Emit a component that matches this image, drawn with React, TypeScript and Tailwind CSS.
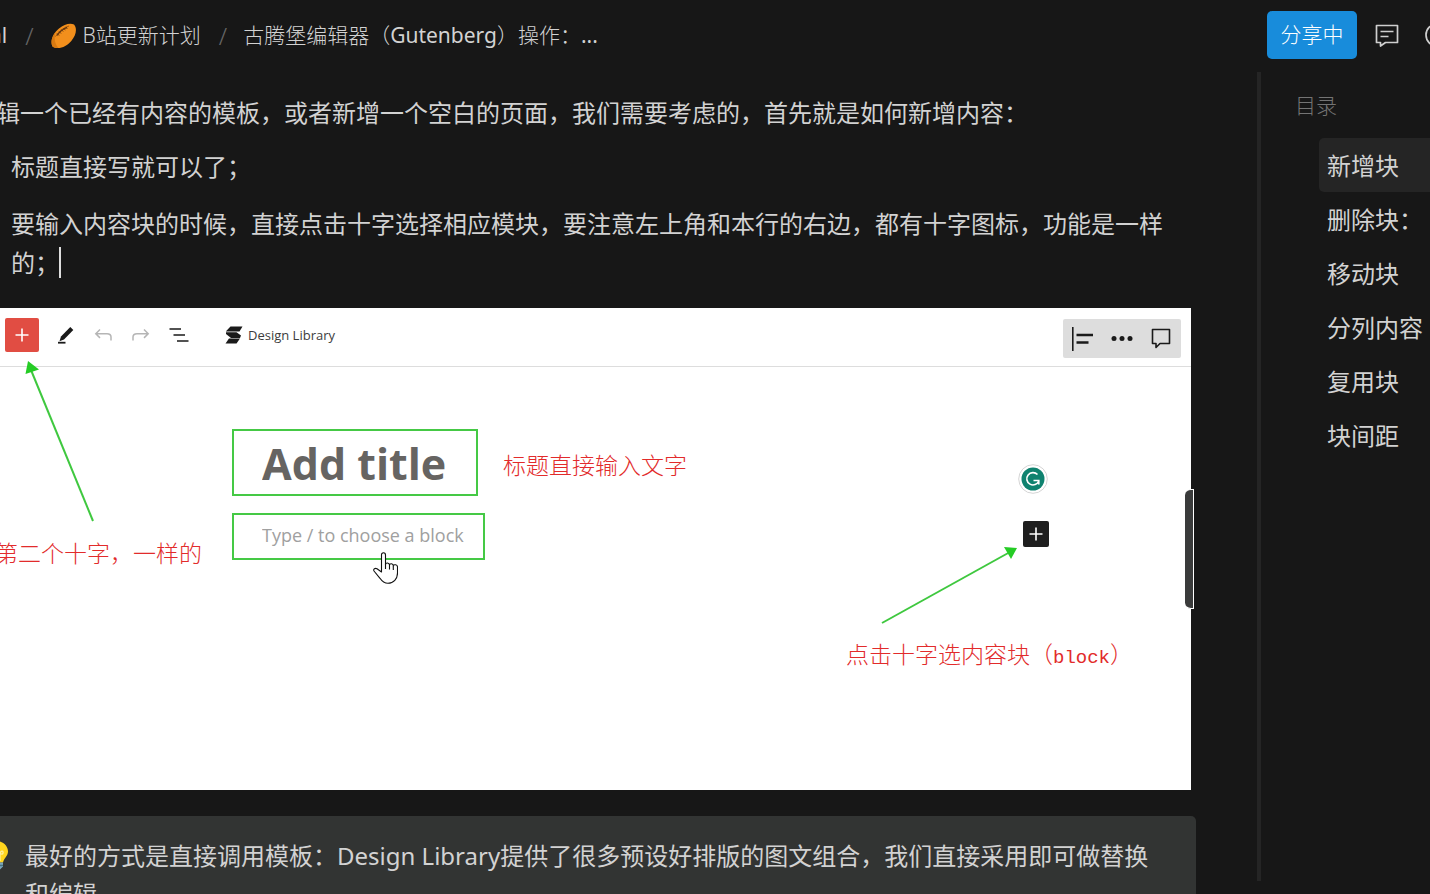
import { useState } from 'react'

const toc = [
    { id: 'add', label: '新增块' },
    { id: 'delete', label: '删除块：' },
    { id: 'move', label: '移动块' },
    { id: 'columns', label: '分列内容' },
    { id: 'reuse', label: '复用块' },
    { id: 'spacing', label: '块间距' },
]

function Football() {
    return (
        <svg viewBox="0 0 28 28" className="size-7 shrink-0" aria-hidden="true">
            <path d="M2.500 24.500C-.2 19 3 11.500 9 6.500 14 2.300 20 .8 24 2.500c3.500 4 2 11-2.500 16.200C16.500 24.500 8.500 28.500 2.500 24.500z" fill="#f28f1c" />
            <path d="M2.500 24.500C.4 20 2 14.500 5.500 10 4 15 4.300 21.500 8.500 26c-2.300.1-4.300-.3-6-1.500z" fill="#d87a12" />
            <path d="M5.500 14.500C8.500 9.500 13 5.800 19 4" fill="none" stroke="#a35c12" strokeWidth="1" />
            <path d="M7 13.500c2.500-3.500 6-6.500 10-8" fill="none" stroke="#5f3310" strokeWidth="1.200" />
            <path d="M7 11.500l2 2M9 9.500l2 2M11.300 7.500l1.800 2M13.800 6l1.400 2.200M16 4.800l1.200 2" stroke="#5f3310" strokeWidth=".9" />
        </svg>
    )
}

function Bulb() {
    return (
        <svg viewBox="0 0 26 32" className="h-8 w-[26px] shrink-0" aria-hidden="true">
            <path d="M13 1C6.500 1 1 5.800 1 11.500c0 4.500 4 6.500 5 11h14c1-4.500 5-6.500 5-11C25 5.800 19.500 1 13 1z" fill="#ffd51e" />
            <path d="M9 21V13l4 2 4-2v8M17 13c1.500-3 3.500-2 3 0s-2 1-3 0" fill="none" stroke="#fff0a0" strokeWidth="1.300" />
            <path d="M6 22.500h14v4l-4 4h-6l-4-4z" fill="#7ba7bd" />
            <path d="M6 25.500h14" stroke="#47707f" strokeWidth="1.500" />
        </svg>
    )
}

function HandCursor() {
    return (
        <svg viewBox="0 0 25 32" className="absolute left-[373px] top-[244px] h-8 w-[25px]" aria-hidden="true">
            <path
                d="M8.500 20V3c0-3 4-3 4 0v9.500c.2-2 3.800-2 4 .5.300-1.800 3.600-1.600 3.800.7.500-1.500 4.200-1.300 4.200 1.300v6c0 6-4 10.300-9.500 10.300-4 0-6-2-8-5L1 19c-1-2 1.200-3.300 3-2.200z"
                fill="#fff"
                stroke="#111"
                strokeWidth="1.100"
                strokeLinejoin="round"
            />
            <path d="M12.500 12v5M16.500 13v4.500M20.300 14v4" stroke="#111" strokeWidth="1.100" />
        </svg>
    )
}

function EditorToolbar() {
    return (
        <div className="flex h-[59px] items-start justify-between border-b border-[#dddddd] pt-[10px] pr-[10px] pl-[5px] leading-6">
            <div className="flex items-center gap-[14px]">
                <button aria-label="Add block" className="flex size-[34px] items-center justify-center rounded-[2px] bg-[#e14d43]">
                    <svg viewBox="0 0 14 14" className="size-[14px]"><path d="M7 .5v13M.5 7h13" stroke="#fff" strokeWidth="1.600" /></svg>
                </button>
                <button aria-label="Edit">
                    <svg viewBox="0 0 24 24" className="size-6">
                        <path d="M17.300 4l3 3-9.300 9.500-4.500 1.700 1.500-4.700z" fill="#1a1a1a" />
                        <path d="M5 19.700h7.500" stroke="#1a1a1a" strokeWidth="1.800" />
                    </svg>
                </button>
                <button aria-label="Undo">
                    <svg viewBox="0 0 24 24" className="size-6" fill="none" stroke="#b5b5b5" strokeWidth="1.500">
                        <path d="M9 6.500L4.800 10.700 9 14.900M5 10.700h11c2.500 0 4 1 4 3.300v3.500" />
                    </svg>
                </button>
                <button aria-label="Redo">
                    <svg viewBox="0 0 24 24" className="size-6" fill="none" stroke="#b5b5b5" strokeWidth="1.500">
                        <path d="M15 6.500l4.200 4.200L15 14.900M19 10.700H8c-2.500 0-4 1-4 3.300v3.500" />
                    </svg>
                </button>
                <button aria-label="List view">
                    <svg viewBox="0 0 24 24" className="size-6" stroke="#1a1a1a" strokeWidth="1.700">
                        <path d="M2.500 6H14M6.500 12h11.500M10 18h11.500" />
                    </svg>
                </button>
                <button className="ml-5 flex items-center gap-[5px] text-[13px] text-[#3c3c3c]">
                    <svg viewBox="0 0 18 18" className="size-[18px]" fill="#1a1a1a">
                        <path d="M5.500.5H17.500L14.500 5.500H.8z" />
                        <path d="M1 6.200h10.500L16 9.500l-1 2.500H6L1 8z" />
                        <path d="M4 12.500h11L11.500 17.500H.5z" />
                    </svg>
                    Design Library
                </button>
            </div>
            <div className="mt-px flex h-[39px] items-center gap-[15px] rounded-[2px] bg-[#dddddd] px-2">
                <button aria-label="Align">
                    <svg viewBox="0 0 24 24" className="size-6" stroke="#1a1a1a">
                        <path d="M1.800 0v24" strokeWidth="1.600" />
                        <path d="M5.500 8h16.500M5.500 15.500h12" strokeWidth="2.600" />
                    </svg>
                </button>
                <button aria-label="More">
                    <svg viewBox="0 0 24 24" className="size-6" fill="#1a1a1a">
                        <circle cx="4" cy="11.500" r="2.500" />
                        <circle cx="12" cy="11.500" r="2.500" />
                        <circle cx="20" cy="11.500" r="2.500" />
                    </svg>
                </button>
                <button aria-label="Comment">
                    <svg viewBox="0 0 24 24" className="size-6" fill="none" stroke="#1a1a1a" strokeWidth="1.600" strokeLinejoin="round">
                        <path d="M3.500 2.500h17v14H11L7 20.500v-4H3.500z" />
                    </svg>
                </button>
            </div>
        </div>
    )
}

function EditorShot() {
    return (
        <figure className="relative mt-[26px] mr-[5px] h-[482px] overflow-hidden bg-white font-['Open_Sans','Noto_Sans_CJK_SC',sans-serif]">
            <EditorToolbar />
            <div className="flex flex-col items-start gap-[17px] pt-[62px] pl-[232px]">
                <input
                    aria-label="Title"
                    placeholder="Add title"
                    className="h-[67px] w-[246px] border-2 border-[#45c945] px-7 pt-[2px] text-[43px] font-bold placeholder:text-[#666462] placeholder:opacity-100"
                />
                <input
                    aria-label="Block"
                    placeholder="Type / to choose a block"
                    className="h-[47px] w-[253px] border-2 border-[#45c945] pr-2 pb-[3px] pl-7 text-lg placeholder:text-[#a0a0a0]"
                />
            </div>

            {/* Arrows */}
            <svg className="absolute inset-0 size-full" aria-hidden="true">
                <path d="M93 213L31 62" stroke="#3fc83f" strokeWidth="2" />
                <path d="M28 53l11 8.500L25.500 66z" fill="#25cc25" />
                <path d="M882 315l128-71" stroke="#3fc83f" strokeWidth="2" />
                <path d="M1017 240l-13-1 7 12z" fill="#25cc25" />
            </svg>

            {/* Notes */}
            <div className="text-[23px] leading-8 font-light text-[#e22b2b]">
                <p className="absolute top-[141px] left-[503px] whitespace-nowrap">标题直接输入文字</p>
                <p className="absolute top-[229px] -left-[5px] whitespace-nowrap">第二个十字，一样的</p>
                <p className="absolute top-[330px] left-[846px] whitespace-nowrap">
                    点击十字选内容块（<span className="font-['Liberation_Mono',monospace] text-[19px]">block</span>）
                </p>
            </div>

            <svg viewBox="0 0 30 30" className="absolute top-[156px] left-[1018px] size-[30px]" aria-hidden="true">
                <circle cx="15" cy="15" r="14.300" fill="#fff" stroke="#d5d5d5" />
                <circle cx="15" cy="15" r="11.500" fill="#0f826f" />
                <path d="M19.500 10.500A6.200 6.200 0 1 0 20.800 17M15.500 16.500h5.300v4" fill="none" stroke="#fff" strokeWidth="1.600" />
            </svg>
            <button aria-label="Insert block" className="absolute top-[213px] left-[1023px] flex size-[26px] items-center justify-center rounded-[2px] bg-[#1e1e1e]">
                <svg viewBox="0 0 14 14" className="size-[14px]"><path d="M7 .5v13M.5 7h13" stroke="#fff" strokeWidth="1.600" /></svg>
            </button>
            <HandCursor />
        </figure>
    )
}

export default function App() {
    const [active, setActive] = useState('add')

    return (
        <div className="flex h-screen flex-col overflow-hidden bg-[#171717] font-['Noto_Sans','Noto_Sans_CJK_SC',sans-serif] text-[#d2d2d2]">
            {/* Top bar */}
            <header className="flex h-[72px] shrink-0 items-start justify-between pt-[11px]">
                <nav className="-ml-[10px] flex h-12 items-center pt-[2px] text-[21px] font-light whitespace-nowrap">
                    <a href="#space" className="font-normal">al</a>
                    <span className="mr-4 ml-[18px] text-2xl text-[#666666]">/</span>
                    <a href="#plan" className="flex items-center gap-[5px]">
                        <Football />
                        B站更新计划
                    </a>
                    <span className="mr-4 ml-[18px] text-2xl text-[#666666]">/</span>
                    <a href="#doc">古腾堡编辑器（<span className="font-normal">Gutenberg</span>）操作：<span className="font-normal">...</span></a>
                </nav>
                <div className="flex h-12 w-[163px] shrink-0 items-center">
                    <button className="h-12 w-[90px] shrink-0 rounded-[5px] bg-[#188cdb] text-[21px] font-light text-white">分享中</button>
                    <button aria-label="评论" className="ml-[18px] shrink-0">
                        <svg viewBox="0 0 24 24" className="size-6" fill="none" stroke="#cfcfcf" strokeWidth="1.700" strokeLinejoin="round">
                            <path d="M1.500 2.500h21v17H10.500L5.500 23v-3.500h-4z" />
                            <path d="M5.500 8.500h13M5.500 13.500h8" />
                        </svg>
                    </button>
                    <button aria-label="帮助" className="ml-[26px] shrink-0">
                        <svg viewBox="0 0 24 24" className="size-6" fill="none" stroke="#cfcfcf" strokeWidth="1.700">
                            <circle cx="12" cy="12" r="11" />
                        </svg>
                    </button>
                </div>
            </header>

            <div className="flex min-h-0 flex-1">
                {/* Document */}
                <main className="relative min-w-0 flex-1 overflow-hidden pt-[21px] pr-[61px] text-2xl leading-[39px]">
                    <p className="-ml-1">辑一个已经有内容的模板，或者新增一个空白的页面，我们需要考虑的，首先就是如何新增内容：</p>
                    <ul className="mt-[15px] space-y-[18px] pl-[11px]">
                        <li>标题直接写就可以了；</li>
                        <li>
                            要输入内容块的时候，直接点击十字选择相应模块，要注意左上角和本行的右边，都有十字图标，功能是一样的；
                            <span className="inline-block h-[31px] w-[2px] bg-[#dddddd] align-[-6px]" />
                        </li>
                    </ul>
                    <EditorShot />
                    <div className="mt-[26px] flex h-32 items-start gap-4 rounded-r-[5px] bg-[#323433] pt-[21px] pr-6">
                        <div className="-ml-[17px] pt-[3px]"><Bulb /></div>
                        <p className="flex-1 leading-[38px]">最好的方式是直接调用模板：Design Library提供了很多预设好排版的图文组合，我们直接采用即可做替换和编辑</p>
                    </div>
                    <div className="absolute top-[417px] right-[63px] h-[120px] w-[9px] rounded-l-[6px] border border-l-0 border-white bg-[#3a3b3b]" />
                </main>

                {/* Table of contents */}
                <aside className="mb-[13px] w-[173px] shrink-0 border-l-4 border-[#252525] pt-[17px]">
                    <h2 className="pl-[34px] text-[21px] leading-8 font-light text-[#747474]">目录</h2>
                    <nav className="mt-[17px] ml-[58px] text-2xl whitespace-nowrap">
                        {toc.map((item) => (
                            <a
                                key={item.id}
                                href={`#${item.id}`}
                                onClick={() => setActive(item.id)}
                                className={`flex h-[54px] items-center rounded-l-[5px] pt-px pl-2 ${active === item.id ? 'bg-[#252525]' : ''}`}
                            >
                                {item.label}
                            </a>
                        ))}
                    </nav>
                </aside>
            </div>
        </div>
    )
}
